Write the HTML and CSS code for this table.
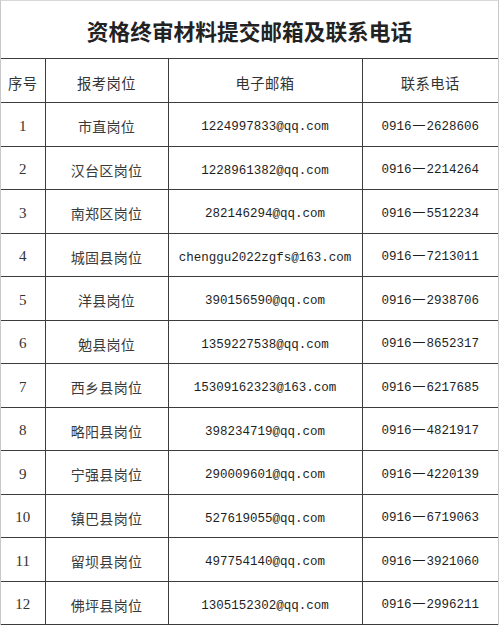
FILE: index.html
```html
<!DOCTYPE html>
<html lang="zh-CN">
<head>
<meta charset="utf-8">
<title>资格终审材料提交邮箱及联系电话</title>
<link rel="stylesheet" href="styles.css">
</head>
<body>
<div class="sheet">
  <div class="title">资格终审材料提交邮箱及联系电话</div>
  <table class="grid">
    <colgroup>
      <col class="c-no"><col class="c-post"><col class="c-mail"><col class="c-tel">
    </colgroup>
    <thead>
      <tr class="head"><th>序号</th><th>报考岗位</th><th>电子邮箱</th><th>联系电话</th></tr>
    </thead>
    <tbody>
      <tr><td class="no">1</td><td class="post">市直岗位</td><td class="mail">1224997833@qq.com</td><td class="tel">0916<span class="dash">—</span>2628606</td></tr>
      <tr><td class="no">2</td><td class="post">汉台区岗位</td><td class="mail">1228961382@qq.com</td><td class="tel">0916<span class="dash">—</span>2214264</td></tr>
      <tr><td class="no">3</td><td class="post">南郑区岗位</td><td class="mail">282146294@qq.com</td><td class="tel">0916<span class="dash">—</span>5512234</td></tr>
      <tr><td class="no">4</td><td class="post">城固县岗位</td><td class="mail">chenggu2022zgfs@163.com</td><td class="tel">0916<span class="dash">—</span>7213011</td></tr>
      <tr><td class="no">5</td><td class="post">洋县岗位</td><td class="mail">390156590@qq.com</td><td class="tel">0916<span class="dash">—</span>2938706</td></tr>
      <tr><td class="no">6</td><td class="post">勉县岗位</td><td class="mail">1359227538@qq.com</td><td class="tel">0916<span class="dash">—</span>8652317</td></tr>
      <tr><td class="no">7</td><td class="post">西乡县岗位</td><td class="mail">15309162323@163.com</td><td class="tel">0916<span class="dash">—</span>6217685</td></tr>
      <tr><td class="no">8</td><td class="post">略阳县岗位</td><td class="mail">398234719@qq.com</td><td class="tel">0916<span class="dash">—</span>4821917</td></tr>
      <tr><td class="no">9</td><td class="post">宁强县岗位</td><td class="mail">290009601@qq.com</td><td class="tel">0916<span class="dash">—</span>4220139</td></tr>
      <tr><td class="no">10</td><td class="post">镇巴县岗位</td><td class="mail">527619055@qq.com</td><td class="tel">0916<span class="dash">—</span>6719063</td></tr>
      <tr><td class="no">11</td><td class="post">留坝县岗位</td><td class="mail">497754140@qq.com</td><td class="tel">0916<span class="dash">—</span>3921060</td></tr>
      <tr><td class="no">12</td><td class="post">佛坪县岗位</td><td class="mail">1305152302@qq.com</td><td class="tel">0916<span class="dash">—</span>2996211</td></tr>
    </tbody>
  </table>
</div>
</body>
</html>
```
FILE: styles.css
```css
html, body {
  margin: 0;
  padding: 0;
  background: #ffffff;
}

.sheet {
  width: 499px;
  box-sizing: border-box;
  border-left: 1px solid #c8c8c8;
  border-right: 1px solid #c8c8c8;
  border-top: 1px solid #d8d8d8;
}

.title {
  height: 57px;
  display: flex;
  align-items: center;
  justify-content: center;
  font-family: "Noto Sans CJK SC", sans-serif;
  font-weight: 700;
  font-size: 21.7px;
  color: #222;
  padding-top: 1px;
  box-sizing: border-box;
}

.grid {
  width: 100%;
  border-collapse: collapse;
  table-layout: fixed;
  color: #333;
}

.c-no { width: 44px; }
.c-post { width: 123px; }
.c-mail { width: 194px; }
.c-tel { width: auto; }

.grid th,
.grid td {
  border: 1px solid #3c3c3c;
  padding: 4px 0 0;
  text-align: center;
  vertical-align: middle;
  white-space: nowrap;
  overflow: hidden;
}

.grid tr > :first-child { border-left: none; }
.grid tr > :last-child { border-right: none; }

.head {
  height: 44px;
}

.head th {
  padding-top: 3px;
  font-family: "Noto Sans CJK SC", sans-serif;
  font-weight: 400;
  font-size: 14.3px;
  letter-spacing: 0.5px;
  color: #333;
}

.grid tbody tr {
  height: 43.5px;
}

.no {
  font-family: "Liberation Serif", serif;
  font-size: 15px;
}

.post {
  font-family: "Noto Sans CJK SC", sans-serif;
  font-size: 14px;
  letter-spacing: 0.3px;
  color: #3a3a3a;
}

.grid .mail,
.grid .tel {
  font-family: "Liberation Mono", monospace;
  font-size: 12.5px;
  line-height: 20px;
  padding-top: 6px;
  color: #1e1e1e;
}

.grid .tel {
  padding-top: 5px;
}

.dash {
  display: inline-block;
  width: 15px;
  font-family: "Noto Sans CJK SC", sans-serif;
  font-size: 15px;
  line-height: 12px;
  text-align: center;
}
```
